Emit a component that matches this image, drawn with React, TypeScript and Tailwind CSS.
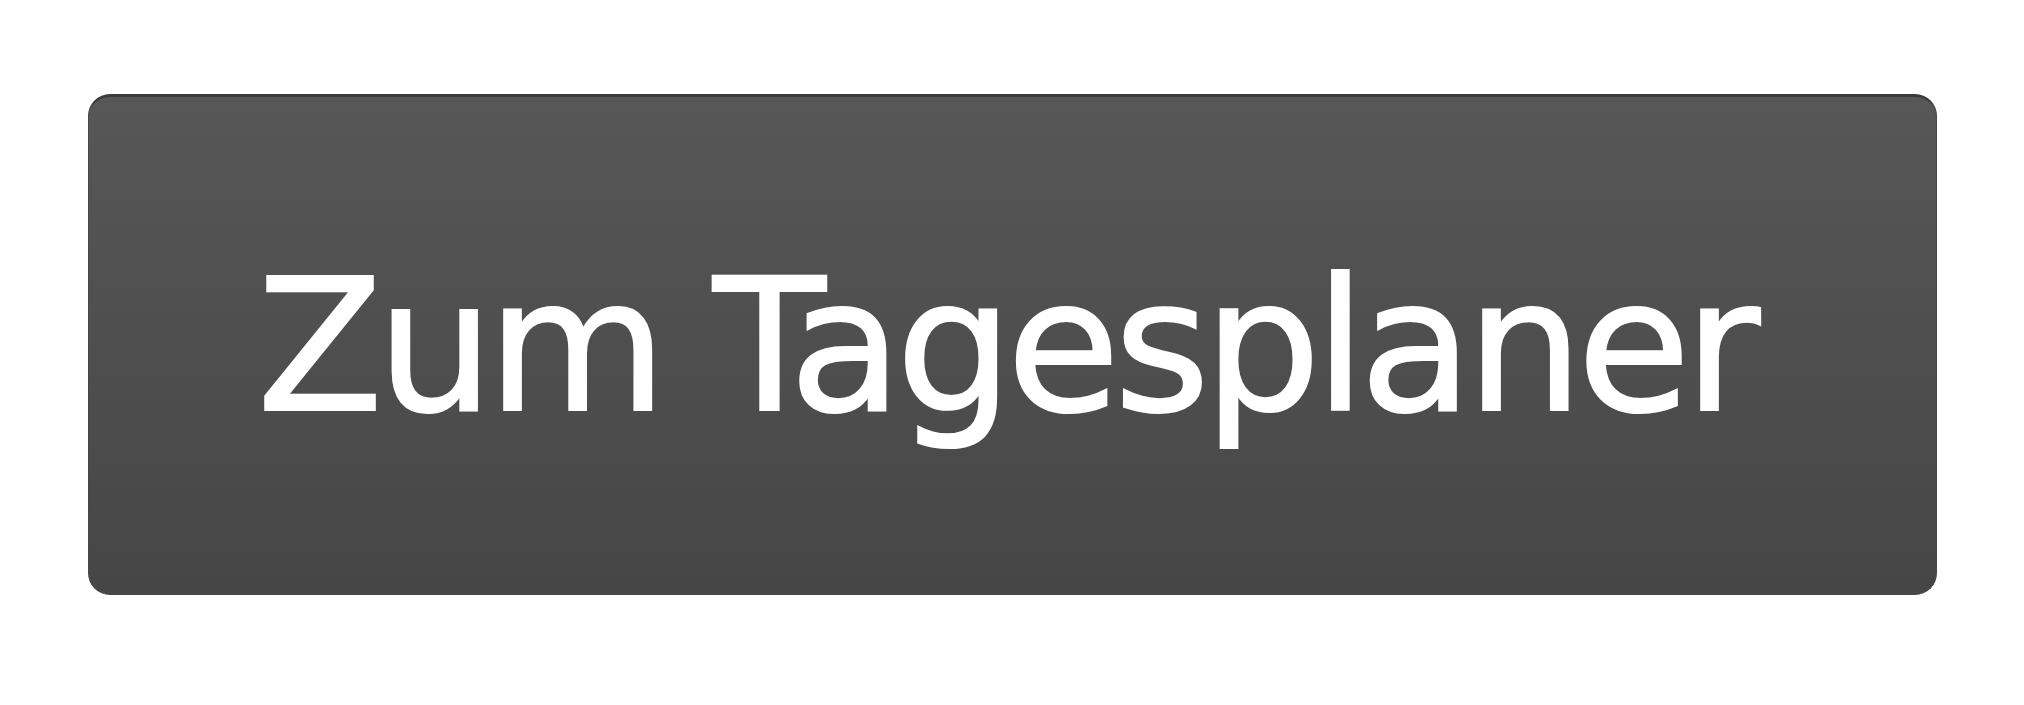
export default function App() {
  return (
    <div className="min-h-[705px] bg-white pl-[88px] pt-[94px]">
      <button
        type="button"
        className="flex h-[501px] w-[1849px] items-center justify-center rounded-[22px] border border-t-[3px] border-[#474747] border-t-[#3b3b3b] bg-gradient-to-b from-[#575757] to-[#464646] pr-[14px] text-white"
      >
        <span className="font-['DejaVu_Sans',sans-serif] text-[184px] leading-none tracking-[-6px] [-webkit-text-stroke:2px_white]">
          Zum Tagesplaner
        </span>
      </button>
    </div>
  );
}
